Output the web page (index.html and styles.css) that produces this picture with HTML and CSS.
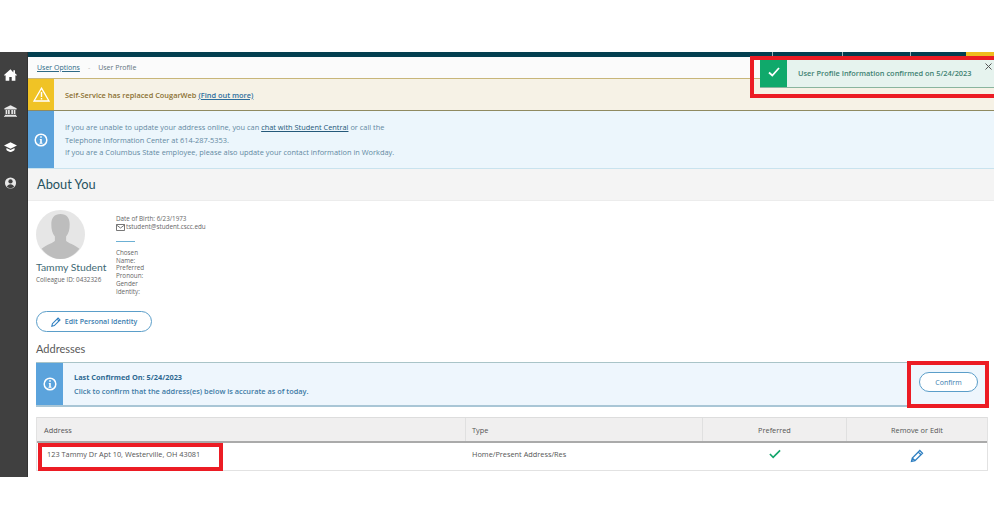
FILE: index.html
```html
<!DOCTYPE html>
<html lang="en">
<head>
<meta charset="utf-8">
<title>User Profile</title>
<link rel="stylesheet" href="styles.css">
</head>
<body>
<div class="app">
  <nav class="side">
    <svg class="nav-icon" viewBox="0 0 16 14"><path fill="#fff" d="M8 0 0 7l1 1 1-.8V14h4.500V9.500h3V14H14V7.200l1 .8 1-1-2.500-2.200V1h-2v3z"/></svg>
    <svg class="nav-icon" viewBox="0 0 16 14"><path fill="#e8e8e8" d="M8 0 .5 3.500V5h15V3.500zM2 5.800h2v5H2zM5 5.800h2v5H5zM9 5.800h2v5H9zM12 5.800h2v5h-2zM1 11.500h14V13H1zM0 13h16v1H0z"/></svg>
    <svg class="nav-icon" viewBox="0 0 16 14"><path fill="#fff" d="M8 1 0 5l8 4 8-4zM3 8.200v2.600C4.500 12.300 6 13 8 13s3.500-.7 5-2.200V8.200L8 10.700z"/></svg>
    <svg class="nav-icon" viewBox="0 0 14 14"><circle cx="7" cy="7" r="6.500" fill="#e8e8e8"/><circle cx="7" cy="5.200" r="2.500" fill="#404040"/><path fill="#404040" d="M2.800 11.500C3.500 9.500 5 8.500 7 8.500s3.500 1 4.200 3C10 12.600 8.500 13 7 13s-3-.4-4.200-1.500z"/></svg>
  </nav>
  <main class="main">
    <div class="topbar">
      <span class="seg seg-a"></span><span class="seg seg-b"></span><span class="seg seg-c"></span><span class="seg seg-d"></span><span class="seg seg-y"></span>
    </div>
    <div class="crumbs"><a class="crumb-link">User Options</a><span class="crumb-sep">-</span><span>User Profile</span></div>
    <div class="banner warn">
      <div class="banner-icon warn-icon">
        <svg width="17" height="15" viewBox="0 0 17 15"><path fill="none" stroke="#fff" stroke-width="1.300" d="M8.500 1.200 16 14H1z"/><path fill="#fff" d="M7.800 5h1.400v5H7.800zM7.800 11h1.400v1.500H7.800z"/></svg>
      </div>
      <p class="warn-text">Self-Service has replaced CougarWeb <a class="warn-link">(Find out more)</a></p>
    </div>
    <div class="banner info">
      <div class="banner-icon info-icon">
        <svg class="i-circle" viewBox="0 0 14 14"><circle cx="7" cy="7" r="5.800" fill="none" stroke="#fff" stroke-width="1.500"/><path fill="#fff" d="M6.200 3.300h1.600v1.500H6.200zM5.800 6h2v3.700h.7v1h-3v-1h.7V7h-.4z"/></svg>
      </div>
      <p class="info-text">If you are unable to update your address online, you can <a class="info-link">chat with Student Central</a> or call the<br>Telephone Information Center at 614-287-5353.<br>If you are a Columbus State employee, please also update your contact information in Workday.</p>
    </div>
    <h1 class="about">About You</h1>
    <section class="profile">
      <div class="identity">
        <svg class="avatar" viewBox="0 0 48 48"><circle cx="24" cy="24" r="24" fill="#e6e6e6"/><path fill="#bdbdbd" d="M24 4c6 0 9 4 9 10 0 5-1 9-3.500 12v4c1 2 9 4 13 8-4.500 6-11 10-18.500 10S10 44 5.500 38c4-4 12-6 13-8v-4C16 23 15 19 15 14c0-6 3-10 9-10z"/></svg>
        <div class="name">Tammy Student</div>
        <div class="cid">Colleague ID: 0432326</div>
      </div>
      <div class="details">
        <div class="line">Date of Birth: 6/23/1973</div>
        <div class="line mail"><svg class="mail-icon" viewBox="0 0 9 7"><path fill="none" stroke="#555" stroke-width=".8" d="M.5.500h8v6h-8zM.5 1l4 3 4-3"/></svg>tstudent@student.cscc.edu</div>
        <div class="rule"></div>
        <div class="wrap">Chosen Name:</div>
        <div class="wrap">Preferred Pronoun:</div>
        <div class="wrap">Gender Identity:</div>
      </div>
    </section>
    <button class="pill edit" type="button">
      <svg width="10" height="10" viewBox="0 0 12 12"><path fill="none" stroke="#2f7fc1" stroke-width="1.300" d="M1 11l.7-3L8.500 1.200l2.300 2.300L4 10.300zM7.300 2.500l2.200 2.200"/></svg>
      Edit Personal Identity
    </button>
    <h2 class="addr-title">Addresses</h2>
    <div class="confirm-bar">
      <div class="banner-icon confirm-icon">
        <svg class="i-circle" viewBox="0 0 14 14"><circle cx="7" cy="7" r="5.800" fill="none" stroke="#fff" stroke-width="1.500"/><path fill="#fff" d="M6.200 3.300h1.600v1.500H6.200zM5.800 6h2v3.700h.7v1h-3v-1h.7V7h-.4z"/></svg>
      </div>
      <div class="confirm-text">
        <div class="confirm-strong">Last Confirmed On: 5/24/2023</div>
        <div>Click to confirm that the address(es) below is accurate as of today.</div>
      </div>
      <button class="pill confirm" type="button">Confirm</button>
    </div>
    <div class="table">
      <div class="thead">
        <div class="cell c-addr">Address</div>
        <div class="cell c-type">Type</div>
        <div class="cell c-pref center">Preferred</div>
        <div class="cell c-edit center">Remove or Edit</div>
      </div>
      <div class="trow">
        <div class="cell c-addr addr-val">123 Tammy Dr Apt 10, Westerville, OH 43081</div>
        <div class="cell c-type">Home/Present Address/Res</div>
        <div class="cell c-pref center"><svg width="12" height="10" viewBox="0 0 13 10"><path fill="none" stroke="#12a56b" stroke-width="1.800" d="M1 5l3.500 3.500L12 1"/></svg></div>
        <div class="cell c-edit center"><svg width="14" height="14" viewBox="0 0 14 14"><path fill="none" stroke="#2f7fc1" stroke-width="1.300" d="M1.500 12.500l.8-3.500L9.800 1.500l2.700 2.700L5 11.700zM8.300 3l2.700 2.700M2.300 9l2.700 2.700"/></svg></div>
      </div>
    </div>
    <div class="toast">
      <div class="toast-icon"><svg width="12" height="10" viewBox="0 0 12 10"><path fill="none" stroke="#fff" stroke-width="1.800" d="M1 5.500 4.300 8.500 11 1"/></svg></div>
      <div class="toast-text">User Profile Information confirmed on 5/24/2023</div>
      <svg class="toast-x" width="7" height="7" viewBox="0 0 7 7"><path stroke="#555" stroke-width="1" d="M.5.500l6 6M6.500.500l-6 6"/></svg>
    </div>
    <div class="mark mark-toast"></div>
    <div class="mark mark-confirm"></div>
    <div class="mark mark-addr"></div>
  </main>
</div>
</body>
</html>
```
FILE: styles.css
```css
* { box-sizing: border-box; }
html, body { margin: 0; background: #fff; }
body { padding-top: 52px; height: 529px; overflow: hidden; font-family: "Open Sans", "Liberation Sans", sans-serif; color: #555; }
p, h1, h2 { margin: 0; font-weight: 400; }
.app { display: flex; height: 425px; }
.side { width: 28px; flex: none; background: #404040; border-right: 1px solid #333; display: flex; flex-direction: column; align-items: center; padding: 17px 7px 0 0; gap: 24px; }
.nav-icon { width: 13px; height: 12px; flex: none; }
.main { position: relative; flex: 1; min-width: 0; display: flex; flex-direction: column; }
.topbar { height: 5px; display: flex; background: #033f50; flex: none; }
.seg { display: block; height: 5px; border-right: 1px solid #9db4ba; }
.seg-a { width: 745px; }
.seg-b { width: 70px; }
.seg-c { width: 68px; }
.seg-d { width: 55px; border-right: 0; }
.seg-y { width: 28px; background: #eebc1d; border-right: 0; }
.crumbs { height: 21px; flex: none; background: #fbfbfb; padding: 0 0 1px 9px; display: flex; align-items: center; gap: 7px; font-size: 7px; color: #5f7480; }
.crumb-link { color: #2e6a86; text-decoration: underline; }
.crumb-sep { color: #bbb; padding: 0 1px; }
.banner { display: flex; flex: none; }
.banner-icon { display: flex; align-items: center; justify-content: center; flex: none; }
.warn { height: 33px; background: #f6f2e6; border-top: 1px solid #c8b679; border-bottom: 1px solid #8f8a60; }
.warn-icon { width: 26px; background: #f0c325; }
.warn-text { padding-left: 11px; align-self: center; font-size: 7.400px; font-weight: 600; color: #8a7030; }
.warn-link { color: #2e6f9e; text-decoration: underline; }
.info { height: 58px; background: #ecf6fc; border-bottom: 1px solid #c9e3ee; }
.info-icon { width: 26px; background: #5ba3dc; }
.i-circle { width: 14px; height: 14px; }
.info-text { padding: 1px 0 0 11px; align-self: center; font-size: 7.400px; line-height: 12.700px; color: #6389a2; }
.info-link { color: #24597a; text-decoration: underline; }
.about { height: 32px; flex: none; background: #f4f4f4; border-bottom: 1px solid #ececec; padding: 0 0 2px 9px; display: flex; align-items: center; font-family: "Lato", sans-serif; font-size: 12.800px; color: #26525f; }
.profile { display: flex; padding: 9px 0 0 8px; height: 110px; flex: none; }
.identity { width: 80px; flex: none; }
.avatar { width: 49px; height: 49px; display: block; }
.name { margin-top: 2px; font-family: "Lato", sans-serif; font-size: 10.400px; color: #3f6a75; white-space: nowrap; line-height: 13px; }
.cid { font-size: 6.300px; line-height: 9px; margin-top: 1px; white-space: nowrap; color: #666; }
.details { width: 30px; font-size: 6.300px; color: #666; margin-top: 5px; }
.line { white-space: nowrap; line-height: 8px; }
.mail { display: flex; align-items: center; gap: 1px; width: max-content; }
.mail-icon { width: 9px; height: 7px; flex: none; }
.rule { width: 19px; height: 1px; background: #6cb0d4; margin: 10px 0 7px; }
.wrap { line-height: 7.700px; }
.pill { background: #fff; border: 1px solid #5b9ec9; border-radius: 11px; color: #3a7cae; font-family: inherit; padding: 0; display: flex; align-items: center; justify-content: center; }
.edit { margin-left: 8px; width: 116px; height: 21px; gap: 4px; font-size: 7px; font-weight: 600; flex: none; }
.addr-title { margin: 9px 0 0 8px; height: 17px; font-family: "Lato", sans-serif; font-size: 11px; line-height: 15px; color: #5a5a5a; flex: none; }
.confirm-bar { margin: 4px 6px 0 8px; height: 45px; flex: none; background: #eef6fd; border-top: 1px solid #a9c4c8; border-bottom: 2px solid #a9c6d6; display: flex; align-items: stretch; }
.confirm-icon { width: 27px; background: #5ba3dc; }
.confirm-text { flex: 1; align-self: center; padding-left: 11px; font-size: 7.350px; font-weight: 600; color: #3d7aa5; line-height: 14px; }
.confirm-strong { color: #2f6a92; font-weight: 700; }
.confirm { align-self: center; width: 59px; height: 20px; margin: 0 10px 4px 0; font-size: 7px; }
.table { margin: 10px 6px 0 8px; flex: none; border-left: 1px solid #e2e2e2; border-right: 1px solid #e2e2e2; }
.thead { display: flex; height: 26px; background: #f0efef; border-top: 1px solid #ddd; border-bottom: 2px solid #aaa; font-size: 7.350px; }
.trow { display: flex; height: 28px; border-bottom: 1px solid #e2e2e2; font-size: 7.350px; }
.cell { padding-left: 6px; display: flex; align-items: center; border-left: 1px solid transparent; }
.thead .cell + .cell { border-left-color: #e0e0e0; }
.trow .cell { align-items: flex-start; padding-top: 6px; }
.c-addr { width: 428px; }
.c-type { width: 237px; }
.c-pref { width: 144px; }
.c-edit { flex: 1; }
.center { justify-content: center; padding-left: 0; }
.addr-val { padding-left: 9px; }
.toast { position: absolute; left: 732px; top: 8px; width: 234px; height: 28px; display: flex; background: #e6f3ee; border-bottom: 1px solid #8ab59e; }
.toast-icon { width: 27px; height: 27px; padding-bottom: 3px; background: #10a96b; display: flex; align-items: center; justify-content: center; flex: none; }
.toast-text { padding: 8px 0 0 11px; font-size: 7.400px; font-weight: 600; color: #3f8272; white-space: nowrap; }
.toast-x { position: absolute; right: 2px; top: 3px; }
.mark { position: absolute; border: 4px solid #ec1c24; }
.mark-toast { left: 722px; top: 4px; width: 245px; height: 42px; border-right: 0; }
.mark-confirm { left: 879px; top: 309px; width: 82px; height: 47px; }
.mark-addr { left: 10px; top: 391px; width: 185px; height: 28px; }
```
